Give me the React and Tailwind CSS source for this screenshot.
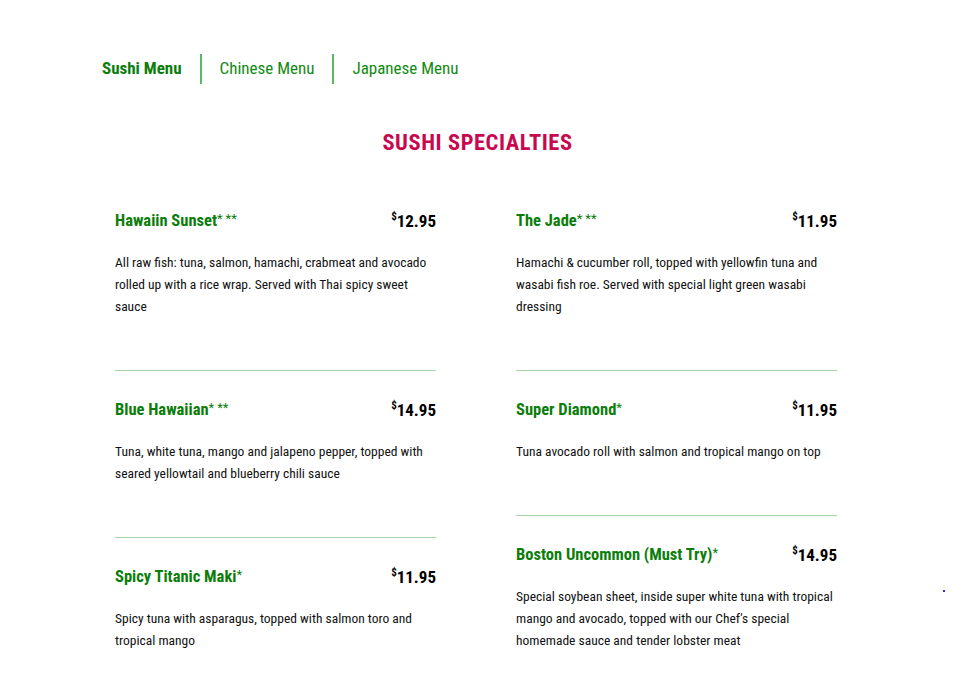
import React from 'react';

const left = [
  { name: 'Hawaiin Sunset', marks: '* **', price: '12.95', desc: 'All raw fish: tuna, salmon, hamachi, crabmeat and avocado rolled up with a rice wrap. Served with Thai spicy sweet sauce' },
  { name: 'Blue Hawaiian', marks: '* **', price: '14.95', desc: 'Tuna, white tuna, mango and jalapeno pepper, topped with seared yellowtail and blueberry chili sauce' },
  { name: 'Spicy Titanic Maki', marks: '*', price: '11.95', desc: 'Spicy tuna with asparagus, topped with salmon toro and tropical mango' },
];

const right = [
  { name: 'The Jade', marks: '* **', price: '11.95', desc: 'Hamachi & cucumber roll, topped with yellowfin tuna and wasabi fish roe. Served with special light green wasabi dressing' },
  { name: 'Super Diamond', marks: '*', price: '11.95', desc: 'Tuna avocado roll with salmon and tropical mango on top' },
  { name: 'Boston Uncommon (Must Try)', marks: '*', price: '14.95', desc: "Special soybean sheet, inside super white tuna with tropical mango and avocado, topped with our Chef's special homemade sauce and tender lobster meat" },
];

const MenuItem = ({ item, first }) => (
  <div className={first ? 'pb-[53px]' : 'border-t border-[#a9d3a9] pt-[30px] pb-[53px]'}>
    <div className="flex items-center justify-between h-5">
      <span className="text-[16.5px] font-bold text-[#0a7d0a]">
        {item.name}<span className="text-[13px] font-normal align-top">{item.marks}</span>
      </span>
      <span className="text-[17px] font-bold text-black">
        <span className="text-[11px] align-top">$</span>{item.price}
      </span>
    </div>
    <p className="mt-[19px] text-[13.5px] leading-[22px] text-[#111]">{item.desc}</p>
  </div>
);

export default function App() {
  return (
    <div className="relative min-h-[680px] bg-white font-['Roboto_Condensed','Liberation_Sans',sans-serif]">
      <nav className="flex items-center pt-[54px] pl-[102px] text-[17px] text-[#138a13]">
        <a className="font-bold text-[#0a7d0a] pr-[18px]">Sushi Menu</a>
        <span className="w-[2px] h-[30px] bg-[#5cb85c]" />
        <a className="px-[18px]">Chinese Menu</a>
        <span className="w-[2px] h-[30px] bg-[#5cb85c]" />
        <a className="pl-[18px]">Japanese Menu</a>
      </nav>

      <h1 className="mt-[42px] text-center text-[22.5px] font-bold text-[#c8084f] tracking-wide">
        SUSHI SPECIALTIES
      </h1>

      <div className="mt-[52px] ml-[115px] grid grid-cols-[321px_321px] gap-x-[80px]">
        <div>
          {left.map((it, i) => <MenuItem key={it.name} item={it} first={i === 0} />)}
        </div>
        <div>
          {right.map((it, i) => <MenuItem key={it.name} item={it} first={i === 0} />)}
        </div>
      </div>

      <span className="absolute left-[943px] top-[590px] w-[2px] h-[2px] bg-[#2a2ae0]" />
    </div>
  );
}
